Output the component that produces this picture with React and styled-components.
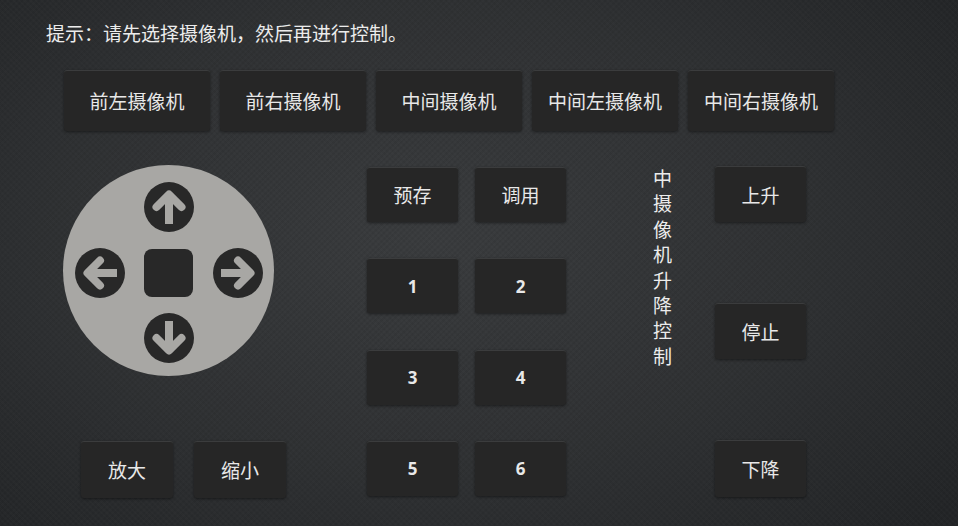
import React from "react";
import styled, { createGlobalStyle } from "styled-components";

const GlobalStyle = createGlobalStyle`
  html, body {
    margin: 0;
    padding: 0;
    width: 100%;
    height: 100%;
  }
  body {
    background: #2c2e30;
    font-family: "Noto Sans", "Noto Sans CJK SC", sans-serif;
  }
`;

const Page = styled.div`
  width: 958px;
  height: 526px;
  box-sizing: border-box;
  padding: 22px 0 0 46px;
  overflow: hidden;
  color: #e8e8e8;
  background:
    repeating-linear-gradient(45deg, rgba(255, 255, 255, 0.012) 0 2px, transparent 2px 4px),
    repeating-linear-gradient(-45deg, rgba(0, 0, 0, 0.05) 0 2px, transparent 2px 4px),
    radial-gradient(ellipse 70% 80% at 45% 45%, #3a3c3e 0%, #2f3133 55%, #232527 100%);
`;

const Hint = styled.div`
  font-size: 19px;
  line-height: 24px;
  color: #ececec;
`;

const CameraRow = styled.div`
  display: flex;
  gap: 10px;
  margin: 24px 0 0 18px;
`;

const Button = styled.button`
  width: ${({ w }) => w || 91}px;
  height: ${({ h }) => h || 56}px;
  padding: 0;
  flex-shrink: 0;
  border: none;
  border-top: 1px solid #3b3c3d;
  border-radius: 3px;
  background: #262626;
  box-shadow: 0 1px 3px rgba(0, 0, 0, 0.45);
  color: #e8e8e8;
  font-family: "Noto Sans", "Noto Sans CJK SC", sans-serif;
  font-size: ${({ bold }) => (bold ? 17 : 19)}px;
  font-weight: ${({ bold }) => (bold ? 700 : 400)};
  cursor: pointer;
  display: flex;
  align-items: center;
  justify-content: center;
`;

const Main = styled.div`
  display: flex;
  align-items: flex-start;
  margin: 34px 0 0 17px;
`;

const LeftCol = styled.div`
  display: flex;
  flex-direction: column;
  width: 211px;
`;

const Disc = styled.div`
  width: 211px;
  height: 211px;
  border-radius: 50%;
  background: #a8a7a4;
  display: flex;
  align-items: center;
  justify-content: center;
`;

const Pad = styled.div`
  display: grid;
  grid-template-columns: repeat(3, 50px);
  grid-template-rows: repeat(3, 50px);
  column-gap: 19px;
  row-gap: 15.5px;
  margin-top: 4px;
  align-items: center;
  justify-items: center;
`;

const ArrowBtn = styled.svg`
  grid-column: ${({ col }) => col};
  grid-row: ${({ row }) => row};
  width: 50px;
  height: 50px;
  display: block;
  cursor: pointer;
`;

const StopBtn = styled.div`
  grid-column: 2;
  grid-row: 2;
  width: 49px;
  height: 48px;
  border-radius: 8px;
  background: #282828;
  cursor: pointer;
`;

const ZoomRow = styled.div`
  display: flex;
  gap: 21px;
  margin: 65px 0 0 18px;
`;

const PresetGrid = styled.div`
  display: grid;
  grid-template-columns: repeat(2, 91px);
  grid-auto-rows: 55px;
  column-gap: 17px;
  row-gap: 36.3px;
  margin: 2px 0 0 93px;
`;

const Label = styled.div`
  width: 19px;
  margin: 2px 0 0 87px;
  font-size: 19px;
  line-height: 25.4px;
  color: #ececec;
  text-align: center;
`;

const RightCol = styled.div`
  display: flex;
  flex-direction: column;
  justify-content: space-between;
  height: 331px;
  margin: 1px 0 0 43px;
`;

const rotations = { up: 0, right: 90, down: 180, left: 270 };

const Arrow = ({ dir, col, row }) => (
  <ArrowBtn viewBox="0 0 50 50" col={col} row={row}>
    <circle cx="25" cy="25" r="25" fill="#282828" />
    <g transform={`rotate(${rotations[dir]} 25 25)`}>
      <path d="M25 42 V14" stroke="#a8a7a4" strokeWidth="8" strokeLinecap="butt" fill="none" />
      <path
        d="M12.5 25 L25 12.5 L37.5 25"
        stroke="#a8a7a4"
        strokeWidth="8"
        strokeLinecap="round"
        strokeLinejoin="round"
        fill="none"
      />
    </g>
  </ArrowBtn>
);

const cameras = ["前左摄像机", "前右摄像机", "中间摄像机", "中间左摄像机", "中间右摄像机"];
const presets = ["1", "2", "3", "4", "5", "6"];

export default function App() {
  return (
    <>
      <GlobalStyle />
      <Page>
        <Hint>提示：请先选择摄像机，然后再进行控制。</Hint>
        <CameraRow>
          {cameras.map((c) => (
            <Button key={c} w={146} h={61}>
              {c}
            </Button>
          ))}
        </CameraRow>
        <Main>
          <LeftCol>
            <Disc>
              <Pad>
                <Arrow dir="up" col={2} row={1} />
                <Arrow dir="left" col={1} row={2} />
                <StopBtn />
                <Arrow dir="right" col={3} row={2} />
                <Arrow dir="down" col={2} row={3} />
              </Pad>
            </Disc>
            <ZoomRow>
              <Button w={92} h={57}>放大</Button>
              <Button w={92} h={57}>缩小</Button>
            </ZoomRow>
          </LeftCol>
          <PresetGrid>
            <Button w={91} h={55}>预存</Button>
            <Button w={91} h={55}>调用</Button>
            {presets.map((p) => (
              <Button key={p} w={91} h={55} bold>
                {p}
              </Button>
            ))}
          </PresetGrid>
          <Label>中摄像机升降控制</Label>
          <RightCol>
            <Button w={91} h={56}>上升</Button>
            <Button w={91} h={56}>停止</Button>
            <Button w={91} h={57}>下降</Button>
          </RightCol>
        </Main>
      </Page>
    </>
  );
}
